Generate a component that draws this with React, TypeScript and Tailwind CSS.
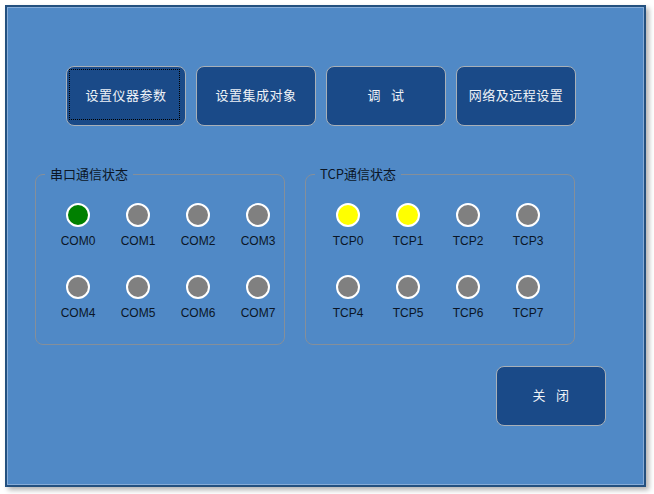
import { type ReactNode } from 'react';

const cjk = "font-['Noto_Sans_CJK_SC','Noto_Sans',sans-serif]";

const comLeds = [
  { name: 'COM0', color: 'bg-[#008000]' },
  { name: 'COM1', color: 'bg-[#808080]' },
  { name: 'COM2', color: 'bg-[#808080]' },
  { name: 'COM3', color: 'bg-[#808080]' },
  { name: 'COM4', color: 'bg-[#808080]' },
  { name: 'COM5', color: 'bg-[#808080]' },
  { name: 'COM6', color: 'bg-[#808080]' },
  { name: 'COM7', color: 'bg-[#808080]' },
];

const tcpLeds = [
  { name: 'TCP0', color: 'bg-[#ffff00]' },
  { name: 'TCP1', color: 'bg-[#ffff00]' },
  { name: 'TCP2', color: 'bg-[#808080]' },
  { name: 'TCP3', color: 'bg-[#808080]' },
  { name: 'TCP4', color: 'bg-[#808080]' },
  { name: 'TCP5', color: 'bg-[#808080]' },
  { name: 'TCP6', color: 'bg-[#808080]' },
  { name: 'TCP7', color: 'bg-[#808080]' },
];

function PanelButton({
  children,
  focused,
  className = 'w-[120px]',
}: {
  children: ReactNode;
  focused?: boolean;
  className?: string;
}) {
  return (
    <button
      className={`relative flex h-[60px] items-center justify-center rounded-[8px] border border-[#a8b0b8] bg-[#1a4a88] pb-[2px] text-[13px] tracking-[0.5px] text-[#eef2f7] ${cjk} ${className}`}
    >
      {focused && (
        <span className="absolute top-[2px] right-[5px] bottom-[5px] left-[2px] border border-dotted border-black" />
      )}
      {children}
    </button>
  );
}

function StatusGroup({
  title,
  leds,
  width,
}: {
  title: string;
  leds: { name: string; color: string }[];
  width: string;
}) {
  return (
    <fieldset className={`h-[180px] min-w-0 rounded-[8px] border border-[#858f9a] px-[9px] ${width}`}>
      <legend className={`px-[5px] text-[13px] leading-[18px] text-[#0b1626] ${cjk}`}>{title}</legend>
      <div className="mt-[20px] ml-[3px] grid grid-cols-[repeat(4,60px)] gap-y-[27px]">
        {leds.map((led) => (
          <div key={led.name} className="flex flex-col items-center">
            <div className={`h-6 w-6 rounded-full border-2 border-white ${led.color}`} />
            <span className="mt-[7px] font-['Liberation_Sans',Arial,sans-serif] text-[12px] leading-[14px] text-[#0b1626]">
              {led.name}
            </span>
          </div>
        ))}
      </div>
    </fieldset>
  );
}

export default function App() {
  return (
    <div className="h-[494px] w-[654px] bg-white pt-[5px] pl-[5px]">
      <div className="h-[482px] w-[641px] border-2 border-[#23507f] shadow-[3px_3px_5px_rgba(0,0,0,0.3)]">
        <div className="flex h-full flex-col border border-[#86acd8] bg-[#5089c6]">
          <div className="mt-[58px] ml-[58px] flex gap-[10px]">
            <PanelButton focused>设置仪器参数</PanelButton>
            <PanelButton>设置集成对象</PanelButton>
            <PanelButton>
              <span className="flex gap-[10px]">
                <span>调</span>
                <span>试</span>
              </span>
            </PanelButton>
            <PanelButton>网络及远程设置</PanelButton>
          </div>

          <div className="mt-[39px] ml-[27px] flex gap-[20px]">
            <StatusGroup title="串口通信状态" leds={comLeds} width="w-[250px]" />
            <StatusGroup title="TCP通信状态" leds={tcpLeds} width="w-[270px]" />
          </div>

          <div className="mt-[21px] flex justify-end pr-[37px]">
            <PanelButton className="w-[110px]">
              <span className="flex gap-[10px]">
                <span>关</span>
                <span>闭</span>
              </span>
            </PanelButton>
          </div>
        </div>
      </div>
    </div>
  );
}
